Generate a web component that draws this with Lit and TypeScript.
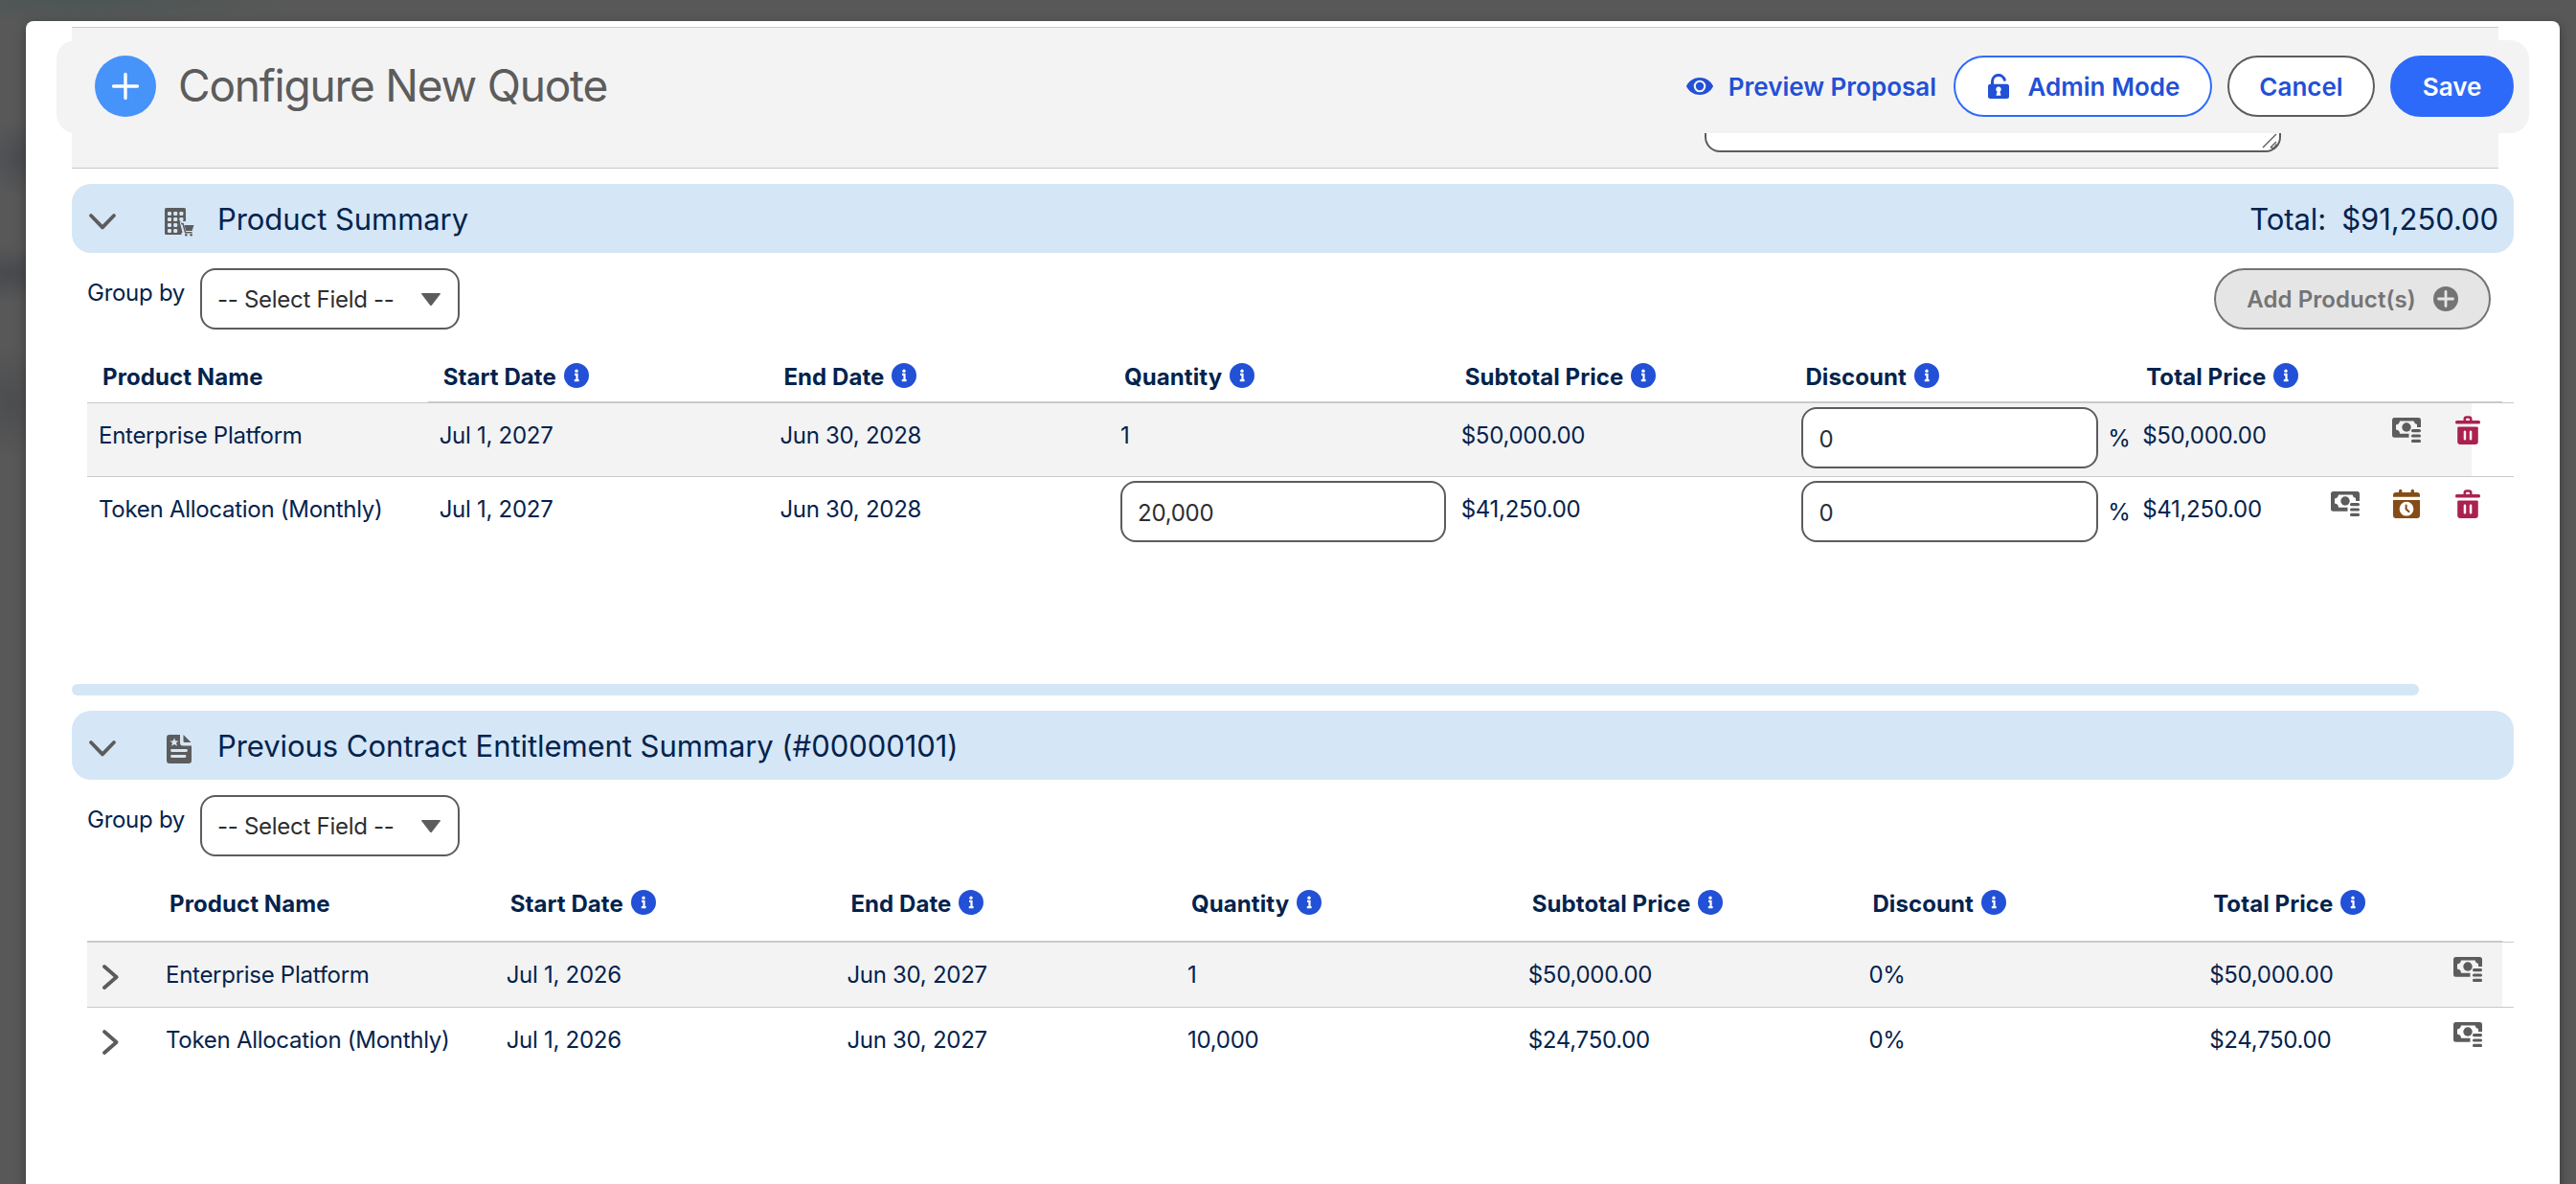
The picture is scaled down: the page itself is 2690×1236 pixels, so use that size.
import { css, html, LitElement, nothing, svg } from "lit";
import { customElement, property } from "lit/decorators.js";

interface Line {
  name: string;
  start: string;
  end: string;
  quantity: string;
  editQuantity?: boolean;
  subtotal: string;
  discount: string;
  total: string;
  actions: string[];
}

const COLUMNS = ["Product Name", "Start Date", "End Date", "Quantity", "Subtotal Price", "Discount", "Total Price"];

const PRODUCTS: Line[] = [
  {
    name: "Enterprise Platform",
    start: "Jul 1, 2027",
    end: "Jun 30, 2028",
    quantity: "1",
    subtotal: "$50,000.00",
    discount: "0",
    total: "$50,000.00",
    actions: ["money", "trash"],
  },
  {
    name: "Token Allocation (Monthly)",
    start: "Jul 1, 2027",
    end: "Jun 30, 2028",
    quantity: "20,000",
    editQuantity: true,
    subtotal: "$41,250.00",
    discount: "0",
    total: "$41,250.00",
    actions: ["money", "calendar", "trash"],
  },
];

const ENTITLEMENTS: Line[] = [
  {
    name: "Enterprise Platform",
    start: "Jul 1, 2026",
    end: "Jun 30, 2027",
    quantity: "1",
    subtotal: "$50,000.00",
    discount: "0%",
    total: "$50,000.00",
    actions: ["money"],
  },
  {
    name: "Token Allocation (Monthly)",
    start: "Jul 1, 2026",
    end: "Jun 30, 2027",
    quantity: "10,000",
    subtotal: "$24,750.00",
    discount: "0%",
    total: "$24,750.00",
    actions: ["money"],
  },
];

// each icon: width, height, shapes
const ICONS: Record<string, [number, number, unknown]> = {
  plus: [28, 28, svg`<path d="M14 1.5v25M1.5 14h25" fill="none" stroke="currentColor" stroke-width="3.4" stroke-linecap="round"/>`],
  eye: [
    28,
    18,
    svg`<path fill-rule="evenodd" d="M.3 8.2C3.200 3 8.200 0 14 0s10.800 3 13.700 8.200q.5.800 0 1.600C24.800 15 19.800 18 14 18S3.200 15 .3 9.800q-.5-.800 0-1.600zM14 2.700a6.300 6.300 0 1 0 0 12.600 6.300 6.300 0 0 0 0-12.600z"/>
      <circle cx="14" cy="9" r="4.200"/>`,
  ],
  unlock: [
    22,
    26,
    svg`<path d="M4.500 12V8a6.500 6.500 0 0 1 12.800-1.600" fill="none" stroke="currentColor" stroke-width="3" stroke-linecap="round"/>
      <path fill-rule="evenodd" d="M2.500 10.800h17A2.500 2.500 0 0 1 22 13.300v10.200a2.500 2.500 0 0 1-2.500 2.500h-17A2.500 2.500 0 0 1 0 23.500V13.300a2.500 2.500 0 0 1 2.500-2.500zM11 13.600a2.700 2.700 0 0 0-1.500 5l-1 4.200h5l-1-4.200a2.700 2.700 0 0 0-1.500-5z"/>`,
  ],
  chevronDown: [28, 17, svg`<path d="M2 2l12 12.400L26 2" fill="none" stroke="currentColor" stroke-width="3.800" stroke-linecap="round" stroke-linejoin="round"/>`],
  chevronRight: [17, 26, svg`<path d="M2 2l12.600 11L2 24" fill="none" stroke="currentColor" stroke-width="3.800" stroke-linecap="round" stroke-linejoin="round"/>`],
  building: [
    31,
    30,
    svg`<path fill-rule="evenodd" d="M1.500 0h19A1.500 1.500 0 0 1 22 1.500V14h-4.500q-2 0-1.500 2l2.500 9.500q-2 1-1 2.500H1.500A1.500 1.500 0 0 1 0 26.500v-25A1.500 1.500 0 0 1 1.500 0z"/>
      <g fill="#d5e6f6">
        <rect x="3" y="4" width="4" height="4" rx="1.200"/><rect x="9.200" y="4" width="4" height="4" rx="1.200"/><rect x="15.400" y="4" width="4" height="4" rx="1.200"/>
        <rect x="3" y="10" width="4" height="4" rx="1.200"/><rect x="9.200" y="10" width="4" height="4" rx="1.200"/><rect x="15.400" y="10" width="4" height="4" rx="1.200"/>
        <rect x="3" y="16" width="4" height="4" rx="1.200"/><rect x="9.200" y="16" width="4" height="4" rx="1.200"/>
        <rect x="3" y="22" width="4" height="4" rx="1.200"/><rect x="9.200" y="22" width="4" height="4" rx="1.200"/>
      </g>
      <path d="M17 16.500h2l2.600 9.300h7" fill="none" stroke="currentColor" stroke-width="1.500"/>
      <path d="M20.500 18h10l-2 6h-6.300z"/><circle cx="22.300" cy="28.300" r="1.300"/><circle cx="27.600" cy="28.300" r="1.300"/>`,
  ],
  contract: [
    26,
    30,
    svg`<path d="M3 0h11v8.500a3 3 0 0 0 3 3h9V27a3 3 0 0 1-3 3H3a3 3 0 0 1-3-3V3a3 3 0 0 1 3-3z"/>
      <path d="M17.500 0l8 8h-6.500a1.500 1.500 0 0 1-1.500-1.500z"/>
      <path fill="#d5e6f6" d="M8 3.500l1.300 3h3.200l-2.500 2.100 1 3.200L8 10l-3 1.800 1-3.200-2.500-2.100h3.200z"/>
      <path d="M5.500 16.500h15M5.500 22.500h13.500" stroke="#d5e6f6" stroke-width="2.800" stroke-linecap="round"/>`,
  ],
  info: [
    26,
    26,
    svg`<circle cx="13" cy="13" r="13"/><circle cx="13" cy="8.200" r="1.700" fill="#fff"/>
      <path d="M11 11.900h2.500v6M10.800 18.200h4.800" fill="none" stroke="#fff" stroke-width="2.200"/>`,
  ],
  addCircle: [26, 26, svg`<circle cx="13" cy="13" r="13"/><path d="M13 5.500v15M5.500 13h15" stroke="#e5e5e5" stroke-width="2.800" stroke-linecap="round"/>`],
  money: [
    30,
    26,
    svg`<path fill-rule="evenodd" d="M2.500 0h25A2.500 2.500 0 0 1 30 2.500V10H26V7a4.500 4.500 0 0 1-3.500-3.500H8A4.500 4.500 0 0 1 4 7.500v5A4.500 4.500 0 0 1 8 16.800h9.500v4h-15A2.500 2.500 0 0 1 0 18.300V2.500A2.500 2.500 0 0 1 2.500 0z"/>
      <circle cx="15" cy="10" r="4.700"/>
      <path d="M21.500 13.600h7M21.500 19h7M21.500 24.400h7" stroke="currentColor" stroke-width="3.100" stroke-linecap="round"/>`,
  ],
  trash: [
    26,
    30,
    svg`<path d="M9.800 6V3.500a2 2 0 0 1 2-2h2.400a2 2 0 0 1 2 2V6" fill="none" stroke="currentColor" stroke-width="2.600"/>
      <rect y="5" width="26" height="3.600" rx="1.600"/>
      <path fill-rule="evenodd" d="M3.500 11.500h19a1.300 1.300 0 0 1 1.300 1.300V27a3 3 0 0 1-3 3H5.200a3 3 0 0 1-3-3V12.800a1.300 1.300 0 0 1 1.300-1.300zM8.700 16.800v7.400a1.200 1.200 0 0 0 2.500 0v-7.400a1.200 1.200 0 0 0-2.500 0zM14.800 16.800v7.400a1.200 1.200 0 0 0 2.500 0v-7.400a1.200 1.200 0 0 0-2.500 0z"/>`,
  ],
  calendar: [
    28,
    30,
    svg`<path d="M3 3h3V1.500a1.700 1.700 0 0 1 3.400 0V3h9.200V1.500a1.700 1.700 0 0 1 3.400 0V3h3a3 3 0 0 1 3 3v1.800H0V6a3 3 0 0 1 3-3z"/>
      <path fill-rule="evenodd" d="M0 11h28v16a3 3 0 0 1-3 3H3a3 3 0 0 1-3-3zM14 12.800a7.400 7.400 0 1 0 0 14.800 7.400 7.400 0 0 0 0-14.800z"/>
      <path d="M13.600 16.500v4l2.800 2.500" fill="none" stroke="currentColor" stroke-width="2" stroke-linecap="round" stroke-linejoin="round"/>`,
  ],
  caret: [20, 13, svg`<path d="M.8 0h18.400q1.200 0 .4 1.200L11 12.400q-1 1.200-2 0L.4 1.200Q-.4 0 .8 0z"/>`],
};

function icon(name: string) {
  const [w, h, shapes] = ICONS[name];
  return html`<svg class="icon icon-${name}" width=${w} height=${h} viewBox="0 0 ${w} ${h}" fill="currentColor">${shapes}</svg>`;
}

const shared = css`
  * {
    box-sizing: border-box;
  }

  .icon {
    display: block;
    flex: none;
    overflow: visible;
  }
`;

@customElement("quote-lines")
class QuoteLines extends LitElement {
  @property({ attribute: false }) lines: Line[] = [];
  @property({ type: Boolean, reflect: true }) expandable = false;

  static styles = [
    shared,
    css`
      :host {
        display: block;
        margin: 20px 0 0 16px;
        --cols: repeat(6, 355.7px) 1fr;
      }

      :host([expandable]) {
        --cols: 70px repeat(6, 355.7px) 1fr;
      }

      .row {
        display: grid;
        grid-template-columns: var(--cols);
        height: 77px;
        border-bottom: 1px solid #c9c9c9;
      }

      :host([expandable]) .row {
        height: 68px;
      }

      .row:last-child {
        border-bottom: 0;
      }

      .striped {
        background: linear-gradient(#f3f3f3, #f3f3f3) no-repeat 0 0 / 2490px 100%;
      }

      :host([expandable]) .striped {
        background-size: 2522px 100%;
      }

      .row.head {
        height: 57px;
        padding-right: 12px;
      }

      :host([expandable]) .row.head {
        height: 70px;
      }

      .head-cell {
        display: flex;
        gap: 8px;
        padding: 15px 0 0 16px;
        font-weight: 700;
        line-height: 30px;
        letter-spacing: var(--bold-spacing);
        border-bottom: 1px solid #c9c9c9;
      }

      :host(:not([expandable])) .head-cell:first-child {
        border-bottom: 0;
      }

      .icon-info {
        color: #2250d6;
      }

      .cell {
        display: flex;
        padding: 19px 0 0 12px;
        line-height: 30px;
      }

      .toggle {
        padding: 23px 0 0 16px;
        color: #5c5c5c;
      }

      .editor {
        padding: 4px 4px 8px 12px;
        gap: 10px;
      }

      .editor input {
        flex: 1;
        min-width: 0;
        height: 64px;
        padding: 2px 16px 0;
        font: inherit;
        letter-spacing: inherit;
        color: #2e2e2e;
        background: #fff;
        border: 2px solid #5c5c5c;
        border-radius: 16px;
      }

      .unit {
        width: 20px;
        line-height: 66px;
      }

      .last {
        padding: 0;
        justify-content: space-between;
      }

      .price {
        padding: 19px 0 0 12px;
      }

      .actions {
        display: flex;
        align-items: center;
        height: 30px;
        margin: 13px 16px 0 0;
      }

      .action {
        display: flex;
        justify-content: center;
        width: 64px;
        color: #5c5c5c;
      }

      .action.trash {
        color: #aa2150;
      }

      .action.calendar {
        color: #854c15;
      }
    `,
  ];

  renderLine(line: Line, index: number) {
    return html`
      <div class="row ${index % 2 === 0 ? "striped" : ""}">
        ${this.expandable ? html`<div class="toggle">${icon("chevronRight")}</div>` : nothing}
        <div class="cell">${line.name}</div>
        <div class="cell">${line.start}</div>
        <div class="cell">${line.end}</div>
        ${line.editQuantity
          ? html`<div class="cell editor"><input .value=${line.quantity} /></div>`
          : html`<div class="cell">${line.quantity}</div>`}
        <div class="cell">${line.subtotal}</div>
        ${this.expandable
          ? html`<div class="cell">${line.discount}</div>`
          : html`<div class="cell editor"><input .value=${line.discount} /><span class="unit">%</span></div>`}
        <div class="cell last">
          <span class="price">${line.total}</span>
          <span class="actions">
            ${line.actions.map((name) => html`<span class="action ${name}">${icon(name)}</span>`)}
          </span>
        </div>
      </div>
    `;
  }

  render() {
    return html`
      <div class="row head">
        ${this.expandable ? html`<div class="head-cell"></div>` : nothing}
        ${COLUMNS.map((label, i) => html`<div class="head-cell">${label}${i > 0 ? icon("info") : nothing}</div>`)}
      </div>
      ${this.lines.map((line, i) => this.renderLine(line, i))}
    `;
  }
}

@customElement("app-root")
class AppRoot extends LitElement {
  static styles = [
    shared,
    css`
      :host {
        display: block;
        height: 1236px;
        padding: 22px 17px 0 27px;
        overflow: hidden;
        font: 24px Inter, "Liberation Sans", sans-serif;
        letter-spacing: -0.28px;
        --bold-spacing: 0.08px;
        white-space: nowrap;
        color: #03234d;
        background:
          radial-gradient(ellipse 230px 26px at 90px 0, #4c5654, transparent),
          radial-gradient(ellipse 30px 40px at 18px 165px, #4a4c50, transparent),
          radial-gradient(ellipse 60px 30px at 10px 286px, #47494e, transparent),
          radial-gradient(ellipse 40px 60px at 10px 420px, #4c4d4f, transparent),
          #585858;
      }

      .modal {
        position: relative;
        height: 1230px;
        padding: 6px 48px 0;
        background: #fff;
        border-radius: 8px;
        box-shadow: 0 4px 12px rgba(0, 0, 0, 0.35);
      }

      .form-panel {
        width: 2534px;
        height: 148px;
        padding: 60px 227px 0 0;
        background: #f3f3f3;
        border: solid #c9c9c9;
        border-width: 1px 0;
      }

      .notes {
        display: flex;
        justify-content: flex-end;
        align-items: flex-end;
        width: 602px;
        height: 70px;
        margin-left: auto;
        background: #fff;
        border: 2px solid #5c5c5c;
        border-radius: 16px;
      }

      /* floats over the scrolled form */
      .header {
        position: absolute;
        top: 20px;
        left: 32px;
        right: 32px;
        display: flex;
        align-items: center;
        gap: 16px;
        height: 97px;
        padding: 0 16px 1px 40px;
        background: #f3f3f3;
        border-radius: 20px;
      }

      .badge {
        display: grid;
        place-items: center;
        width: 64px;
        height: 64px;
        margin-right: 7px;
        border-radius: 50%;
        color: #fff;
        background: #4693fa;
      }

      .title {
        flex: 1;
        margin: 0;
        padding-bottom: 3px;
        font-size: 46px;
        font-weight: 400;
        letter-spacing: -1.2px;
        color: #5c5c5c;
      }

      .button {
        display: flex;
        align-items: center;
        justify-content: center;
        gap: 20px;
        height: 64px;
        font-size: 26px;
        font-weight: 600;
        letter-spacing: 0;
        border: 2px solid #5c5c5c;
        border-radius: 32px;
        color: #2250d6;
        background: #fff;
      }

      .preview {
        gap: 16px;
        margin-right: 2px;
        border: 0;
        background: none;
      }

      .admin {
        width: 270px;
        padding-left: 2px;
        border-color: #2e6af9;
      }

      .cancel {
        width: 154px;
      }

      .save {
        width: 129px;
        color: #fff;
        background: #2e6af9;
        border-color: #2e6af9;
      }

      .add {
        width: 289px;
        gap: 18px;
        margin-right: 24px;
        font-size: 24px;
        letter-spacing: var(--bold-spacing);
        color: #747474;
        background: #e5e5e5;
        border-color: #747474;
      }

      .section {
        margin: 16px 0 0;
      }

      .section-bar {
        display: flex;
        align-items: center;
        height: 72px;
        padding: 0 16px 0 18px;
        font-size: 31px;
        letter-spacing: -0.06px;
        background: #d5e6f6;
        border-radius: 20px;
      }

      .section-bar .icon {
        margin-top: 7px;
        color: #5c5c5c;
      }

      .section-bar .icon-contract {
        margin-left: 2px;
      }

      .section-icon {
        display: flex;
        width: 55px;
        margin-left: 51px;
      }

      .section-name {
        flex: 1;
        font: inherit;
        margin: 0;
      }

      .amount {
        margin-left: 16px;
      }

      .toolbar {
        display: flex;
        height: 64px;
        margin: 16px 0 0 16px;
      }

      .group-label {
        width: 118px;
        line-height: 52px;
      }

      .select {
        display: flex;
        align-items: center;
        justify-content: space-between;
        width: 271px;
        height: 64px;
        padding: 0 18px 0 16px;
        color: #2e2e2e;
        border: 2px solid #5c5c5c;
        border-radius: 16px;
      }

      .select .icon {
        color: #5c5c5c;
      }

      .spacer {
        flex: 1;
      }

      .section-body {
        height: 450px;
        padding-top: 16px;
      }

      .section-body .toolbar {
        margin-top: 0;
      }

      .scrollbar {
        width: 2451px;
        height: 12px;
        border-radius: 6px;
        background: #d5e6f6;
      }
    `,
  ];

  renderToolbar(action: unknown = nothing) {
    return html`
      <div class="toolbar">
        <span class="group-label">Group by</span>
        <div class="select">-- Select Field -- ${icon("caret")}</div>
        <span class="spacer"></span>
        ${action}
      </div>
    `;
  }

  renderBar(name: string, iconName: string, total: unknown = nothing) {
    return html`
      <div class="section-bar">
        ${icon("chevronDown")}
        <span class="section-icon">${icon(iconName)}</span>
        <h2 class="section-name">${name}</h2>
        ${total}
      </div>
    `;
  }

  render() {
    return html`
      <div class="modal">
        <div class="form-panel">
          <div class="notes">
            <svg width="18" height="18" viewBox="0 0 18 18" fill="none" stroke="#5c5c5c" stroke-width="1.400">
              <path d="M1 15L15 1M9 15l6-6M9.500 15.500l3 0 3-4" />
            </svg>
          </div>
        </div>

        <section class="section">
          ${this.renderBar("Product Summary", "building", html`<span>Total:</span><span class="amount">$91,250.00</span>`)}
          <div class="section-body">
            ${this.renderToolbar(html`<div class="button add">Add Product(s) ${icon("addCircle")}</div>`)}
            <quote-lines .lines=${PRODUCTS}></quote-lines>
          </div>
          <div class="scrollbar"></div>
        </section>

        <section class="section">
          ${this.renderBar("Previous Contract Entitlement Summary (#00000101)", "contract")}
          <div class="section-body">
            ${this.renderToolbar()}
            <quote-lines expandable .lines=${ENTITLEMENTS}></quote-lines>
          </div>
        </section>

        <header class="header">
          <span class="badge">${icon("plus")}</span>
          <h1 class="title">Configure New Quote</h1>
          <div class="button preview">${icon("eye")}Preview Proposal</div>
          <div class="button admin">${icon("unlock")}Admin Mode</div>
          <div class="button cancel">Cancel</div>
          <div class="button save">Save</div>
        </header>
      </div>
    `;
  }
}
